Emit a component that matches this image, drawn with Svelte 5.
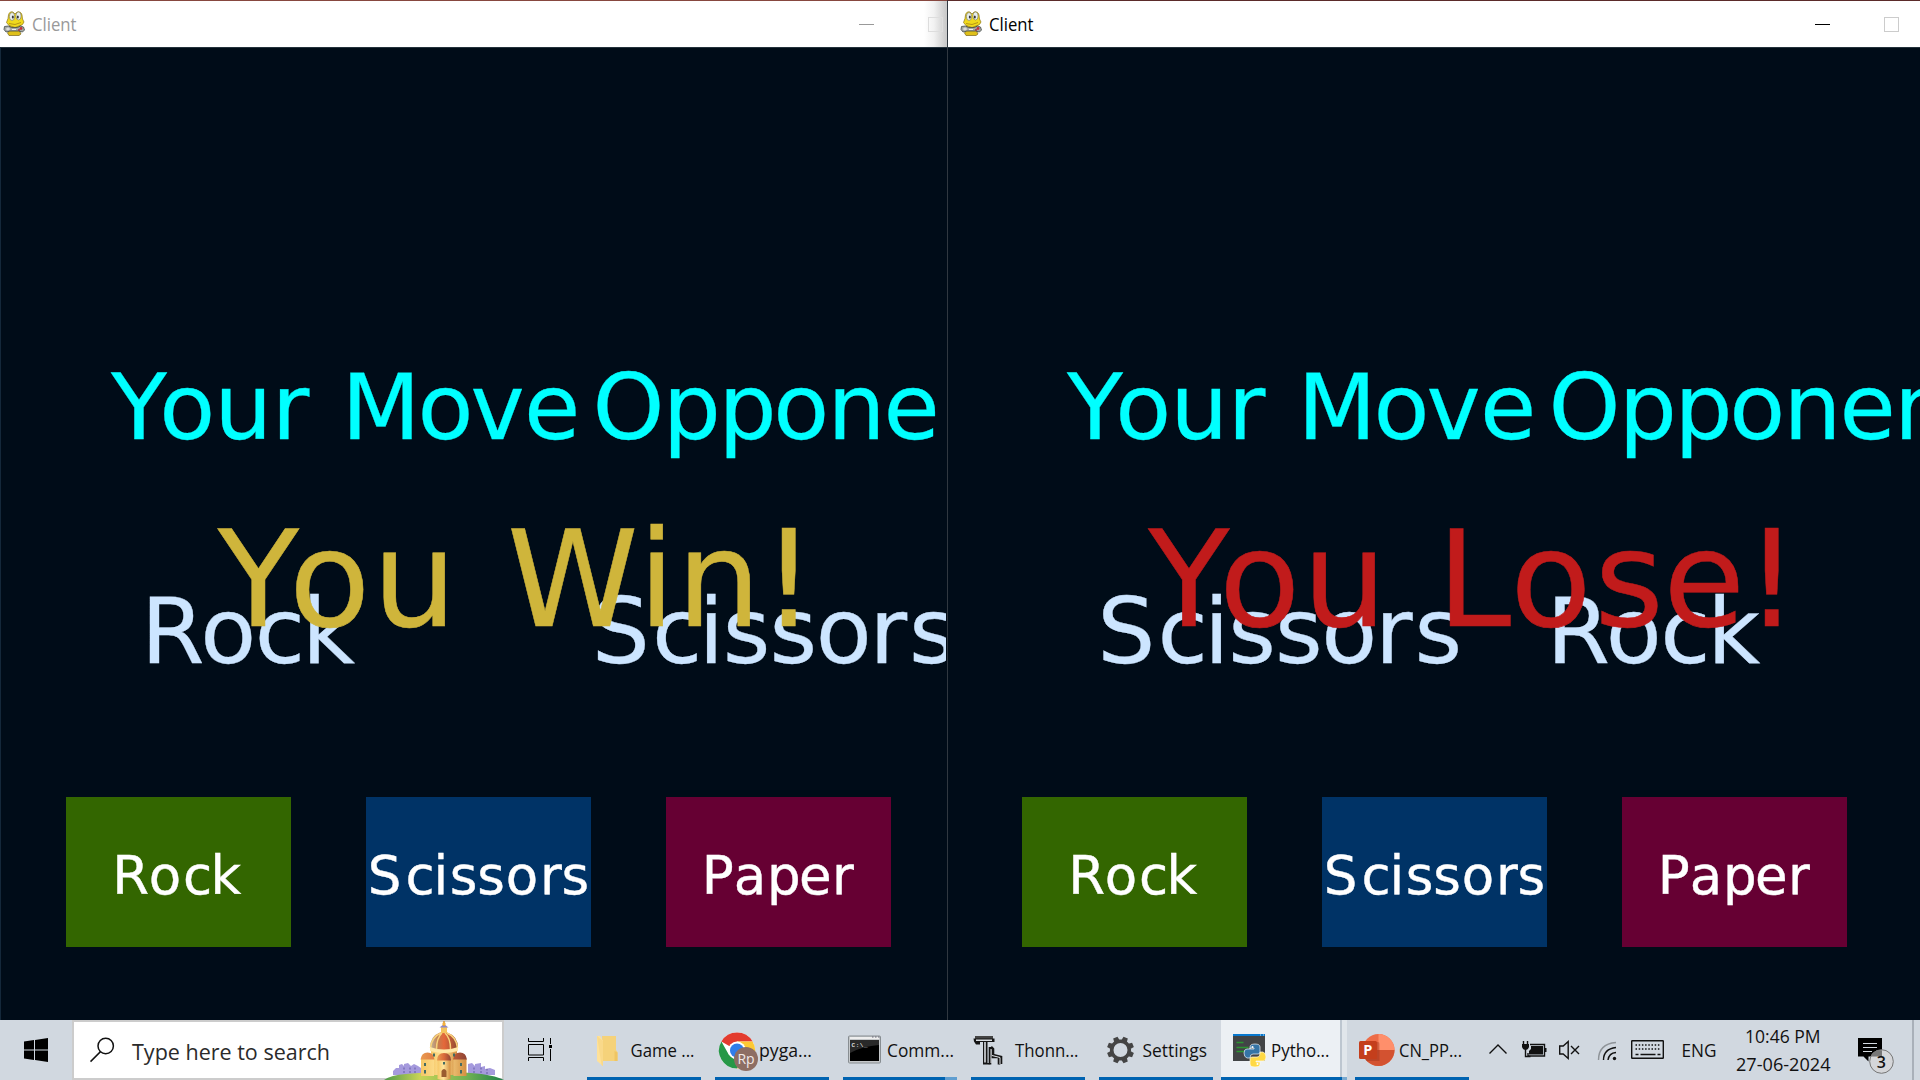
<script>
  // Left side bearings of the display face, in units of 1/2048 em
  const bearing = {
    Y: -4, o: 113, u: 174, r: 186, M: 181, v: 61, e: 113, O: 115, p: 186, n: 186, t: 55,
    R: 201, c: 113, k: 186, S: 115, i: 193, s: 105, W: 75, '!': 297, L: 201, P: 201, a: 123
  };
  const place = (text, size, lefts) =>
    lefts.map((x, i) => (x - (bearing[text[i]] * size) / 2048).toFixed(2)).join(' ');

  const heads = [
    { t: 'Your', x: [110.8, 164.4, 222, 280] },
    { t: 'Move', x: [349.6, 422.5, 473.3, 529] },
    { t: 'Opponent', x: [597.6, 671, 726.8, 778.2, 835.7, 888.6, 946.3, 1003] }
  ];
  const shift = (arr, d) => arr.map((v) => v + d);
  const rock = [0, 55.3, 109.8, 160.2];
  const scissors = [0, 60, 110, 130.4, 177.2, 223.9, 280.8, 316.7];

  const games = [
    {
      side: 'left', view: '0 0 946 640',
      moves: [{ t: 'Rock', x: shift(rock, 150) }, { t: 'Scissors', x: shift(scissors, 597) }],
      result: [
        { t: 'You', x: [217.4, 296.3, 383.9] },
        { t: 'Win!', x: [511.9, 650.8, 688.8, 781.3] }
      ],
      color: 'win'
    },
    {
      side: 'right', view: '-8 0 972 640',
      moves: [{ t: 'Scissors', x: shift(scissors, 146.5) }, { t: 'Rock', x: shift(rock, 599.4) }],
      result: [
        { t: 'You', x: [192.1, 270.3, 357.8] },
        { t: 'Lose!', x: [494, 561.5, 645.3, 714.6, 808.4] }
      ],
      color: 'lose'
    }
  ];
  const buttons = [
    { t: 'Rock', cls: 'green', x: [51.4, 85.7, 120, 149.4] },
    { t: 'Scissors', cls: 'blue', x: [4.7, 42.4, 72.4, 86.5, 114, 142.6, 178.9, 198.3] },
    { t: 'Paper', cls: 'plum', x: [41, 71, 105.9, 135.9, 170.8] }
  ];
  const tasks = [
    { id: 'folder', t: 'Game ...', x: 50.5, w: 64 },
    { id: 'chrome', t: 'pyga...', x: 51, w: 53 },
    { id: 'cmd', t: 'Comm...', x: 51, w: 67 },
    { id: 'thonny', t: 'Thonn...', x: 51, w: 63.5 },
    { id: 'gear', t: 'Settings', x: 50.5, w: 64.5 },
    { id: 'python', t: 'Pytho...', x: 51, w: 58.5 },
    { id: 'ppt', t: 'CN_PP...', x: 51, w: 63 }
  ];
  const teeth = [0, 45, 90, 135, 180, 225, 270, 315];
</script>

{#snippet snake()}
  <svg class="snake" width="22" height="25" viewBox="0 0 22 25">
    <path d="M7 14h10l-1 5 2 4-2 1.500H6L4.500 22l2-3z" fill="#dfc01a" stroke="#7a651c" stroke-width=".7" />
    <path d="M5.500 4Q6.500 0 10 1l2 2 2-2q4-1 5 3l.5 4 1.500 3q-1 3.500-5 4l-4 1.500-6-2-2.500-3 1.500-4z" fill="#f0d91c" stroke="#8d761c" stroke-width=".7" />
    <ellipse cx="9" cy="5.500" rx="2.600" ry="4" fill="#e8eeee" stroke="#77744c" stroke-width=".6" />
    <ellipse cx="15.500" cy="5" rx="2.600" ry="4" fill="#e8eeee" stroke="#77744c" stroke-width=".6" />
    <ellipse cx="9.800" cy="6" rx="1" ry="1.600" fill="#333" /><ellipse cx="14.800" cy="6" rx="1" ry="1.600" fill="#333" />
    <path d="M6 12.500q6 2.500 12-1" fill="none" stroke="#b69714" />
    <path d="M1.500 15.500l4-.5 3 1.500h6l3-1.500 3 1 1 3-2 2-4-1H7l-4 1-2-2.500z" fill="#a5a8a4" stroke="#444b49" stroke-width=".8" />
    <path d="M3 18h4m-2-1.500v3M9 18.500h4" stroke="#eee" stroke-width="1" />
    <circle cx="18" cy="17.500" r="1.400" fill="#c63139" /><circle cx="16" cy="19" r=".9" fill="#a32832" />
  </svg>
{/snippet}

{#snippet icon(id)}
  {#if id === 'folder'}
    <path d="M22 16h14v14l1.500 2v9H23z" fill="#f5d27a" />
    <path d="M34.500 31l3 1.500v8.500h-3z" fill="#efc563" />
    <path d="M17 16h3l3 5v25l-6-5z" fill="#ffe199" />
    <path d="M17 16l6 5v25l-1.500-1z" fill="#f9d98a" />
  {:else if id === 'chrome'}
    <circle cx="29" cy="30.500" r="18" fill="#fff" />
    <path d="M29 30.500L13.400 21.500A18 18 0 0 1 44.600 21.500H29z" fill="#e33b2e" />
    <path d="M29 21.500h15.600A18 18 0 0 1 29 48.500l7.800-13.500z" fill="#fcc934" />
    <path d="M13.400 21.500A18 18 0 0 0 29 48.500l7.800-13.500L29 39l-8-4z" fill="#279847" />
    <circle cx="29" cy="30.500" r="9" fill="#fff" />
    <circle cx="29" cy="30.500" r="7" fill="#2f7de9" />
    <circle cx="38" cy="39" r="12" fill="#8d6e63" />
    <text class="badge" x="29.500" y="43.500" textLength="17">Rp</text>
  {:else if id === 'cmd'}
    <rect x="12.500" y="16" width="32" height="27" rx="1" fill="#c5c8ca" stroke="#888e92" />
    <path d="M14 18h29" stroke="#eee" stroke-width="2" />
    <path d="M36 17h1.500m1.500 0h1.500m1.500 0h1.500" stroke="#667" />
    <rect x="14" y="20" width="29" height="21" fill="#000" />
    <path d="M14 20h29v5q-16 1-29 8z" fill="#292929" />
    <text class="prompt" x="15.500" y="26.500" textLength="16">C:\_</text>
  {:else if id === 'thonny'}
    <path d="M11 16h18v3H11z" fill="#444" />
    <path d="M9.500 18.500h21v3.500h-7V43h2v1.500h-6.500V22h-3v2.500h-4l-2-3z" fill="#151515" />
    <path d="M12 20.200h16M21 22v20.500" stroke="#d9dde2" stroke-width="1.600" fill="none" />
    <path d="M26 27v17.500M26 37h9v7.500M27 27l2 2v6l8 2v7" stroke="#151515" stroke-width="2.600" fill="none" />
    <path d="M27 29v14m1-7.500 8 2v6.500" stroke="#e5e8eb" stroke-width="1" fill="none" />
  {:else if id === 'gear'}
    <circle cx="28.500" cy="30" r="8.800" fill="none" stroke="#444" stroke-width="3.600" />
    {#each teeth as a}
      <path d="M25.600 20.500l.6-4h4.600l.6 4z" fill="#444" transform="rotate({a + 22.5} 28.5 30)" />
    {/each}
  {:else if id === 'python'}
    <rect x="13" y="14" width="32" height="27" fill="#424446" />
    <path d="M13 15h32" stroke="#0878ce" stroke-width="2" />
    <path d="M40 15h1m2 0h1" stroke="#b9def5" />
    <path d="M16.500 22.500h7m-7 5h12m-12 4h8" stroke="#2c9632" stroke-width="1.400" />
    <path d="M30 29v-2q0-3 5-3t5 3v5q0 2-2 2h-5q-3 0-3 4h-3q-3-1-3-5t3-4h7v-1h-4z" fill="#3574a6" stroke="#eef5fa" stroke-width=".7" />
    <path d="M40 42v2q0 3-5 3t-5-3v-5q0-2 2-2h5q3 0 3-5h3q3 1 3 5t-3 4h-7v1h4z" fill="#ffd944" stroke="#fffbe8" stroke-width=".7" />
    <circle cx="32.500" cy="27" r="1" fill="#fff" /><circle cx="37.500" cy="44" r="1" fill="#fff" />
  {:else}
    <circle cx="30.500" cy="30" r="16" fill="#ed6c47" />
    <path d="M30.500 14a16 16 0 0 1 16 16h-16z" fill="#ff8f6b" />
    <path d="M14.500 30a16 16 0 0 0 32 0z" fill="#d35230" />
    <path d="M16 22h14q1.500 0 1.500 2v17H18z" fill="#8e2a17" opacity=".35" />
    <rect x="11" y="21" width="18" height="18" rx="1.500" fill="#c43e1c" />
    <text class="pee" x="15.200" y="34.700">P</text>
  {/if}
{/snippet}

<div class="desktop">
  <div class="windows">
    {#each games as g}
      <section class="window {g.side}">
        <header>
          {@render snake()}
          <svg class="title" width="60" height="46" viewBox="0 0 60 46">
            <text x="0" y="30" textLength="44.500" lengthAdjust="spacingAndGlyphs">Client</text>
          </svg>
          <span class="fill"></span>
          <span class="minimize"></span>
          <span class="maximize"></span>
        </header>
        <main>
          <svg class="canvas" height="640" viewBox={g.view} preserveAspectRatio="xMinYMin slice">
            {#each heads as h}
              <text class="head" y="391.500" x={place(h.t, 91.5, h.x)}>{h.t}</text>
            {/each}
            {#each g.moves as m}
              <text class="move" y="616.300" x={place(m.t, 91.5, m.x)}>{m.t}</text>
            {/each}
            {#each g.result as r}
              <text class={g.color} y="578.700" x={place(r.t, 133, r.x)}>{r.t}</text>
            {/each}
          </svg>
          <div class="choices">
            {#each buttons as b}
              <button class={b.cls} aria-label={b.t}>
                <svg width="225" height="150" viewBox="0 0 225 150">
                  <text y="96.900" x={place(b.t, 53, b.x)}>{b.t}</text>
                </svg>
              </button>
            {/each}
          </div>
        </main>
      </section>
    {/each}
  </div>

  <footer>
    <div class="start">
      <svg width="24" height="24" viewBox="0 0 24 24">
        <path d="M0 3.600l10-1.500v9.400H0zM11 2l13-2v11.500H11zM0 12.500h10v9.400l-10-1.500zM11 12.500h13V24l-13-2z" fill="#000" />
      </svg>
    </div>
    <div class="search">
      <svg width="432" height="60" viewBox="0 0 432 60">
        <defs>
          <linearGradient id="stone"><stop offset="0" stop-color="#f6c766" /><stop offset=".45" stop-color="#ffe49a" /><stop offset="1" stop-color="#d48f40" /></linearGradient>
          <linearGradient id="tile"><stop offset="0" stop-color="#b9b6a0" /><stop offset=".3" stop-color="#c77b4c" /><stop offset=".5" stop-color="#e5683a" /><stop offset="1" stop-color="#8c4a34" /></linearGradient>
          <linearGradient id="small"><stop offset="0" stop-color="#e99a50" /><stop offset=".5" stop-color="#da6a3b" /><stop offset="1" stop-color="#8e4434" /></linearGradient>
          <linearGradient id="hill"><stop offset="0" stop-color="#4d9a4a" /><stop offset=".3" stop-color="#c9d456" /><stop offset=".7" stop-color="#6eb053" /><stop offset="1" stop-color="#1d7f49" /></linearGradient>
        </defs>
        <g fill="none" stroke="#111" stroke-width="1.500">
          <circle cx="33.700" cy="26" r="7.700" /><path d="M28.500 31.600L18.500 41.600" />
        </g>
        <text x="60" y="40" textLength="198" lengthAdjust="spacingAndGlyphs">Type here to search</text>
        <path d="M321 55v-4l3-3h3v-3l3-1 2 2v-2l4-1 3 3 3-2 4 2 3 2v8zM396 55V44l4-1 3 3v-2l6-1v4l4-1v3l5-1 5 2v5z" fill="#a59add" />
        <path d="M332 53v-7m6 7v-6m5 6v-6m59 6v-7m7 7v-7m6 8v-5" stroke="#7a70b7" stroke-width="1.500" stroke-dasharray="2 1.500" />
        <path d="M312 60q7-5 22-6 20-2 38-2 45 0 60 8z" fill="url(#hill)" />
        <path d="M359 26h26v29h-26z" fill="url(#stone)" />
        <path d="M358 28q0-12 10-15.500h7q11 3.500 11 15.500-14 5-28 0z" fill="url(#tile)" />
        <path d="M358.500 28q1-11 10.500-15M364.500 29q0-11 5.500-16M378.500 29q0-11-5.500-16M385.500 28q-1-11-10.500-15" fill="none" stroke="#f7d27a" stroke-width="1.500" />
        <path d="M358 27q14 5 28 0v4q-14 4-28 0z" fill="#ffe8a6" />
        <path d="M369 7h6v6h-6z" fill="#f5c45e" /><path d="M367.500 7.500L372 4l4.500 3.500z" fill="#9087c4" />
        <path d="M372 1v5" stroke="#d38e2c" stroke-width="1.500" /><circle cx="372" cy="4" r="1.700" fill="#f5b13e" />
        <path d="M349 39h13v17h-13zM381.500 39h13v17h-13z" fill="url(#stone)" />
        <path d="M348.500 39.500q1-7 7-7t7 7zM381 39.500q1-7 7-7t7 7z" fill="url(#small)" />
        <path d="M365.500 39h13v20q-6.500 2-13 0z" fill="url(#stone)" /><path d="M365 40.500q0-7.500 7-7.500t7 7.500z" fill="url(#small)" />
        <path d="M369.500 57v-6q2.500-4 5 0v6z" fill="#9a5c30" />
        <path d="M362 33.500v3m20-3v3M353 43v3m0 4v3.500m36-10.500v3m0 4v3.500M372 42v2.500" stroke="#446c63" stroke-width="2" />
      </svg>
    </div>
    <div class="view">
      <svg width="24" height="24" viewBox="0 0 24 24" fill="none" stroke="#000" stroke-width="1">
        <path d="M.5 0v3.500h15V0M.5 23v-3.500h15V23M.5 6.500h15v10.500H.5zM22.500 0v6M22.500 11v12" />
        <path d="M21 7h3v3h-3z" fill="#000" stroke="none" />
      </svg>
    </div>
    <nav>
      {#each tasks as t}
        <div class="task {t.id}">
          <svg width="128" height="60" viewBox="0 0 128 60">
            {@render icon(t.id)}
            <text class="label" x={t.x} y="37" textLength={t.w} lengthAdjust="spacingAndGlyphs">{t.t}</text>
          </svg>
        </div>
      {/each}
    </nav>
    <div class="tray">
      <svg width="436" height="60" viewBox="1476 0 436 60">
        <g fill="none" stroke="#111" stroke-width="1.400">
          <path d="M1489.500 33.500l8.500-8.500 8.500 8.500" />
          <path d="M1530 24.500h14.500v11.500H1528v-3" />
          <path d="M1523.500 21v4m4-4v4M1525.500 30v6.500h5" />
          <path d="M1559.700 26h3.500l5-4.500v17l-5-4.500h-3.500zM1571 26l8 8m0-8l-8 8" />
          <path d="M1603.500 40q0-11 12.500-12.500M1608 40q1-7 8-7.500" />
          <path d="M1598.500 40q0-16 17.500-17.500" stroke="#8e9398" />
          <rect x="1631.700" y="20.700" width="31.600" height="17.600" rx=".5" />
          <path d="M1635.500 25h25M1635.500 29h25" stroke-dasharray="1.500 1.700" />
          <path d="M1635.500 34.500h3m2 0h15m2 0h3" />
        </g>
        <path d="M1531 26h12v8.500h-14v-3.500l2-2zM1545 28h1.500v4H1545zM1522 24h7v3q-1 3-3.500 3t-3.500-3z" fill="#111" />
        <circle cx="1614.500" cy="38.500" r="1.700" fill="#111" />
        <text x="1681.500" y="37" textLength="35" lengthAdjust="spacingAndGlyphs">ENG</text>
        <text x="1745" y="23" textLength="75.500" lengthAdjust="spacingAndGlyphs">10:46 PM</text>
        <text x="1736" y="51" textLength="94.500" lengthAdjust="spacingAndGlyphs">27-06-2024</text>
        <path d="M1858 18h24v18.500h-13.500v5l-5-5h-5.500z" fill="#000" />
        <path d="M1863 23.500h14m-14 4h14m-14 4h9" stroke="#d4dae0" stroke-width="1.200" />
        <circle cx="1881.500" cy="41.500" r="11.800" fill="#d5d6d8" fill-opacity=".94" stroke="#777" />
        <path d="M1870.500 36.500q2-5 7-6.300h4.500v6.300z" fill="#777" />
        <text class="count" x="1876.800" y="47.500">3</text>
      </svg>
    </div>
    <div class="peek"></div>
  </footer>
</div>

<style>
  :global(body) { margin: 0; overflow: hidden; background: #000c18; }
  .desktop { width: 1920px; height: 1080px; display: flex; flex-direction: column; overflow: hidden; font-family: "Open Sans", "Noto Sans", sans-serif; }
  svg { display: block; flex: none; }
  .windows { height: 1020px; display: flex; }
  .window { box-sizing: border-box; height: 1020px; overflow: hidden; display: flex; flex-direction: column; border-top: 1px solid #87473f; background: #000c18; }
  .left { width: 947px; }
  .right { width: 973px; border-left: 1px solid #303840; border-top-color: #5b2b2a; }
  header { height: 46px; flex: none; display: flex; align-items: center; background: #fff; box-sizing: border-box; padding-left: 3px; }
  .left header { background: linear-gradient(90deg, #fff 924px, #f1f1f1 934px, #cacaca 946px); }
  .right header { padding-left: 12px; }
  .snake { margin: 0 7px 2px 0; }
  .title text { font-size: 17.8px; fill: #000; }
  .left .title text { fill: #999; }
  .fill { flex: 1; }
  .minimize { width: 15px; height: 1px; background: #000; }
  .left .minimize { background: #999; }
  .maximize { box-sizing: border-box; width: 15px; height: 15px; border: 1px solid #ccc; margin: 0 4px 0 54px; }
  .left .maximize { border-color: #ddd; }
  .right .maximize { margin-right: 21px; }
  main { flex: 1; display: flex; flex-direction: column; border-top: 1px solid #24323c; }
  .left main { border-left: 1px solid #14283a; }
  .canvas { width: 972px; overflow: hidden; font-family: "DejaVu Sans", sans-serif; margin-top: -1px; }
  .left .canvas { width: 946px; margin-left: -1px; }
  .head, .move { font-size: 91.5px; stroke-width: 0.3px; }
  .head { fill: #00ffff; stroke: #00ffff; }
  .move { fill: #cce5ff; stroke: #cce5ff; }
  .win, .lose { font-size: 133px; stroke-width: 0.5px; }
  .win { fill: #cfb53b; stroke: #cfb53b; }
  .lose { fill: #c11b1b; stroke: #c11b1b; }
  .choices { display: flex; gap: 75px; margin-top: 110px; padding-left: 65px; }
  .right .choices { padding-left: 74px; }
  button { width: 225px; height: 150px; padding: 0; border: 0; flex: none; }
  .green { background: #336600; }
  .blue { background: #003366; }
  .plum { background: #660033; }
  button text { font-family: "DejaVu Sans", sans-serif; font-size: 53px; fill: #fff; stroke: #fff; stroke-width: 0.4px; }
  footer { height: 60px; display: flex; background: #d1d8e0; }
  .start { width: 72px; display: flex; align-items: center; justify-content: center; }
  .search { width: 432px; box-sizing: border-box; box-shadow: inset 0 0 0 2px #ccc; background: #fff; }
  .search text { font-size: 22.3px; fill: #2b2b2b; }
  .view { width: 76px; display: flex; align-items: center; padding-left: 24px; box-sizing: border-box; }
  nav { width: 896px; display: flex; }
  .task { width: 128px; height: 60px; background: linear-gradient(#0063b1, #0063b1) 7px 57px / 114px 3px no-repeat; }
  .cmd { background: linear-gradient(90deg, #0063b1 102px, #609ed0 102px) 7px 57px / 114px 3px no-repeat; }
  .python { background: linear-gradient(90deg, transparent 1px, #0063b1 1px 122px, #7baad0 122px 127px, transparent 127px) 0 57px / 128px 3px no-repeat, linear-gradient(90deg, transparent 1px, #ecf0f4 1px 120px, #bdc6d0 120px 122px, #e1e6eb 122px 127px, transparent 127px); }
  .label, .tray text { font-size: 17.8px; fill: #111; }
  .badge { font-size: 14px; fill: #f0e9e7; }
  .prompt { font: bold 6px "Liberation Mono", monospace; fill: #ddd; }
  .pee { font-size: 14.5px; font-weight: 700; fill: #fff; }
  .tray .count { font-size: 16px; font-weight: 600; }
  .peek { box-sizing: border-box; width: 8px; border-left: 2px solid #a9b0b9; }
</style>
